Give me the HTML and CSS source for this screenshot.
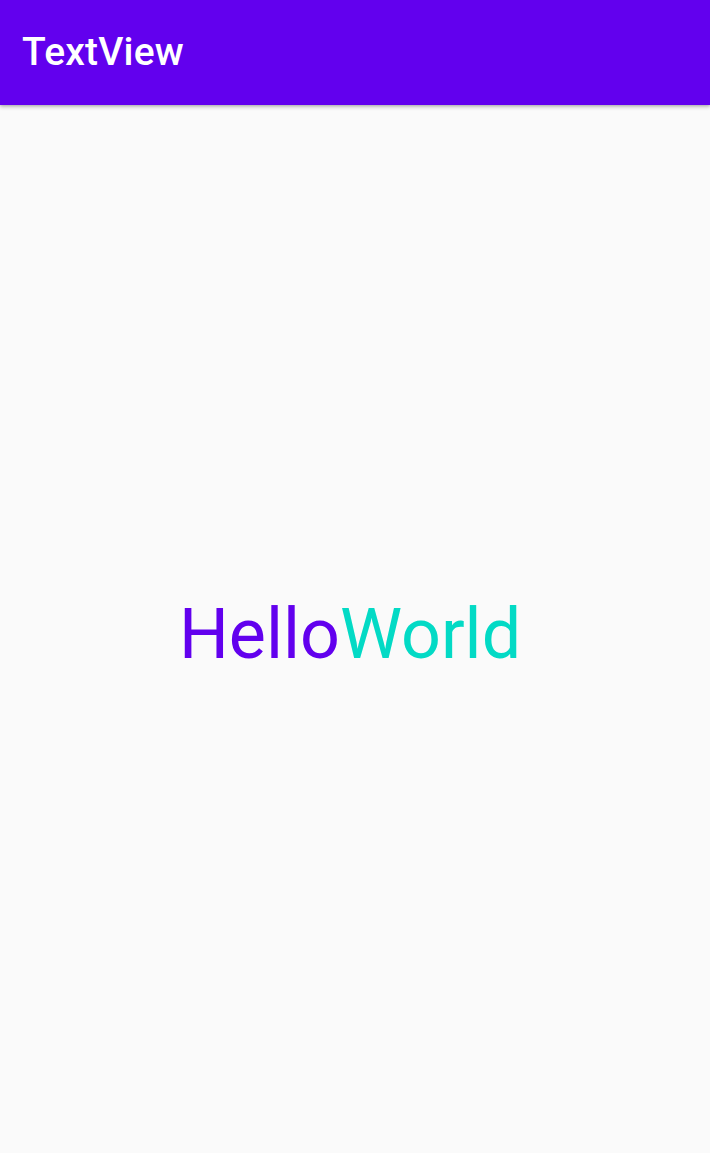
FILE: index.html
```html
<!DOCTYPE html>
<html>
<head>
<meta charset="utf-8">
<link rel="stylesheet" href="styles.css">
</head>
<body>
<div class="app">
  <header class="appbar"><span class="title">TextView</span></header>
  <main class="content">
    <p class="hello"><span class="purple">Hello</span><span class="teal">World</span></p>
  </main>
</div>
</body>
</html>
```

FILE: styles.css
```css
html, body {
  margin: 0;
  padding: 0;
  height: 100%;
}
body {
  background: #fafafa;
  font-family: Roboto, "Noto Sans", sans-serif;
}
.app {
  display: flex;
  flex-direction: column;
  height: 1153px;
}
.appbar {
  height: 105px;
  flex: none;
  background: #6200ee;
  display: flex;
  align-items: center;
  padding-left: 22px;
  box-shadow: 0 2px 4px rgba(0,0,0,0.22), 0 1px 2px rgba(0,0,0,0.12);
  position: relative;
  z-index: 1;
}
.title {
  color: #fff;
  font-weight: 500;
  font-size: 39px;
  letter-spacing: 0.2px;
  line-height: 1;
}
.content {
  flex: 1;
  display: flex;
  align-items: center;
  justify-content: center;
}
.hello {
  margin: 0 0 0 -10px;
  font-size: 70px;
  line-height: 1;
  padding-top: 10px;
}
.purple { color: #6200ee; }
.teal { color: #03dac5; }
```
